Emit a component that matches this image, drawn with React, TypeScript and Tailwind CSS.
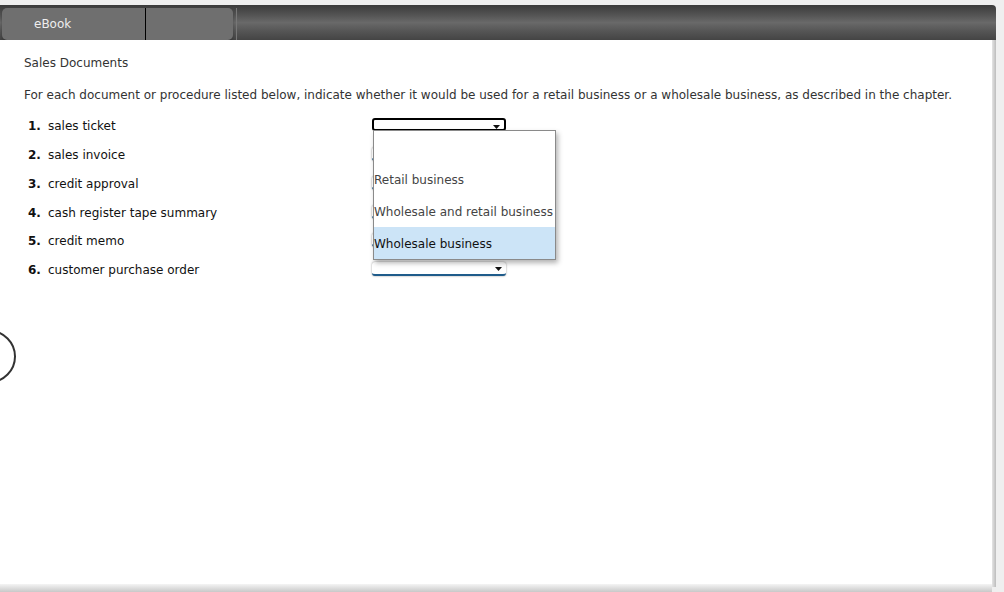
import React from 'react';

const items = [
  'sales ticket',
  'sales invoice',
  'credit approval',
  'cash register tape summary',
  'credit memo',
  'customer purchase order',
];

const options = ['', 'Retail business', 'Wholesale and retail business', 'Wholesale business'];

function Caret() {
  return (
    <svg width="7" height="4" viewBox="0 0 7 4" className="absolute right-[4px] top-[5px]">
      <path d="M0 0h7L3.5 4z" fill="#111" />
    </svg>
  );
}

function FakeSelect({ index }: { index: number }) {
  if (index === 0) {
    return (
      <div className="relative w-[134px] h-[13px] -mt-[3px] rounded-[3px] border-2 border-black bg-white">
        <Caret />
      </div>
    );
  }
  return (
    <div className="relative w-[134px] h-[14px] -mt-[2px] rounded-[3px] bg-white shadow-[0_0_2px_rgba(0,0,0,0.45)] border-b-2 border-[#1f5c8b]">
      <Caret />
    </div>
  );
}

export default function App() {
  return (
    <div
      className="relative w-[1004px] h-[592px] overflow-hidden bg-[#efefef]"
      style={{ fontFamily: '"DejaVu Sans", Verdana, sans-serif' }}
    >
      <div className="pt-[5px] w-[996px]">
        {/* toolbar */}
        <div className="h-[35px] rounded-tr-[4px] bg-[linear-gradient(to_bottom,#3b3b3b_0%,#555_30%,#696969_50%,#555_75%,#444_100%)] flex items-start pl-[2px] pt-[3px] gap-[3px]">
          <div className="flex h-[32px] w-[231px] rounded-[5px] bg-[#6f6f6f] shadow-[0_2px_3px_rgba(0,0,0,0.25)]">
            <div className="w-[144px] flex items-center pl-[32px] text-[12px] text-[#eeeeee] border-r border-black">
              eBook
            </div>
            <div className="flex-1" />
          </div>
          <div className="w-px h-[32px] bg-[#777]" />
        </div>

        {/* page */}
        <div className="flex h-[547px]">
          <div className="w-[992px] bg-white relative">
            <div className="pl-[24px] pt-[14px] text-[12px] text-[#333]">Sales Documents</div>
            <div className="pl-[24px] pt-[14px] text-[12px] text-[#333] whitespace-nowrap">
              For each document or procedure listed below, indicate whether it would be used for a retail business or a wholesale business, as described in the chapter.
            </div>
            <div className="pt-[8px] flex flex-col">
              {items.map((t, i) => (
                <div key={t} className="h-[28.75px] flex items-center text-[12px] text-[#111]">
                  <span className="w-[48px] pl-[28px] font-bold">{i + 1}.</span>
                  <span className="w-[324px]">{t}</span>
                  <FakeSelect index={i} />
                </div>
              ))}
            </div>
            <div className="absolute left-[-37px] top-[290px] w-[53px] h-[53px] rounded-full border-[2.5px] border-[#333]" />
            {/* open dropdown */}
            <div className="absolute left-[373px] top-[90px] w-[183px] bg-white border border-[#8a8a8a] shadow-[2px_3px_5px_rgba(0,0,0,0.3)]">
              {options.map((o, i) => (
                <div
                  key={i}
                  className={
                    'h-[32px] flex items-end pb-[6px] text-[12px] whitespace-nowrap ' +
                    (i === 3 ? 'bg-[#cce4f7] text-[#111]' : 'text-[#444]')
                  }
                >
                  {o}
                </div>
              ))}
            </div>
          </div>
          <div className="w-[4px] bg-[linear-gradient(to_right,#e4e4e4,#bcbcbc)]" />
        </div>
      </div>
      <div className="absolute left-0 top-[584px] w-[992px] h-[8px] bg-[linear-gradient(to_bottom,#f4f4f4,#c8c8c8)]" />
    </div>
  );
}
